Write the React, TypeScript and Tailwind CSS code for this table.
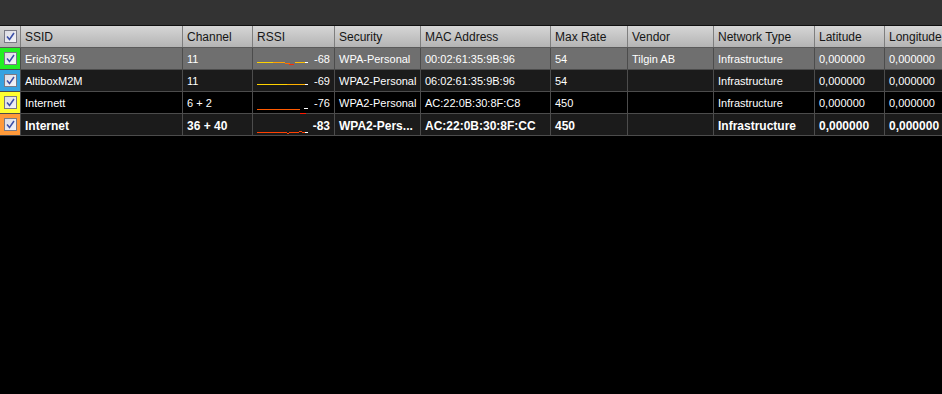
import React from "react";

const widths = [21, 162, 70, 82, 86, 130, 77, 86, 101, 70, 80];
const headers = ["", "SSID", "Channel", "RSSI", "Security", "MAC Address", "Max Rate", "Vendor", "Network Type", "Latitude", "Longitude"];

type Seg = [number, number, number, string]; // x, y, w, color

type Row = {
  color: string;
  bg: string;
  bold?: boolean;
  cells: string[];
  rssi: string;
  spark: Seg[];
};

function Check({ small }: { small?: boolean }) {
  return (
    <div className="w-[13px] h-[13px] border border-[#7a7a86] bg-gradient-to-br from-[#dcdce4] to-[#f4f4f8] flex items-center justify-center">
      <svg width="9" height="9" viewBox="0 0 9 9">
        <path d="M1 4.5 L3.5 7.5 L8 1" fill="none" stroke="#3b4fa8" strokeWidth={small ? 1.5 : 1.6} />
      </svg>
    </div>
  );
}

function Spark({ segs }: { segs: Seg[] }) {
  return (
    <svg width="56" height="22" viewBox="0 0 56 22" className="block" shapeRendering="crispEdges">
      {segs.map(([x, y, w, c], i) => (
        <rect key={i} x={x} y={y} width={w} height={1} fill={c} />
      ))}
    </svg>
  );
}

const rows: Row[] = [
  {
    color: "#22f022",
    bg: "bg-[#6f6f6f]",
    cells: ["Erich3759", "11", "", "WPA-Personal", "00:02:61:35:9B:96", "54", "Tilgin AB", "Infrastructure", "0,000000", "0,000000"],
    rssi: "-68",
    spark: [
      [0, 14, 16, "#ffd200"],
      [16, 14, 12, "#ffa000"],
      [28, 15, 5, "#ff6a00"],
      [32, 16, 5, "#ff2a00"],
      [38, 14, 10, "#ffc000"],
      [48, 14, 3, "#ffffff"],
    ],
  },
  {
    color: "#35a2e0",
    bg: "bg-[#1b1b1b]",
    cells: ["AltiboxM2M", "11", "", "WPA2-Personal", "06:02:61:35:9B:96", "54", "", "Infrastructure", "0,000000", "0,000000"],
    rssi: "-69",
    spark: [
      [0, 14, 30, "#ffd200"],
      [30, 14, 18, "#ffb000"],
      [48, 14, 3, "#ffffff"],
    ],
  },
  {
    color: "#ffff30",
    bg: "bg-[#000000]",
    cells: ["Internett", "6 + 2", "", "WPA2-Personal", "AC:22:0B:30:8F:C8", "450", "", "Infrastructure", "0,000000", "0,000000"],
    rssi: "-76",
    spark: [
      [0, 17, 43, "#ff5a00"],
      [47, 16, 4, "#ffffff"],
      [43, 21, 6, "#ff1a00"],
    ],
  },
  {
    color: "#ff9a3a",
    bg: "bg-[#1b1b1b]",
    bold: true,
    cells: ["Internet", "36 + 40", "", "WPA2-Pers...", "AC:22:0B:30:8F:CC", "450", "", "Infrastructure", "0,000000", "0,000000"],
    rssi: "-83",
    spark: [
      [0, 18, 30, "#ff4000"],
      [30, 19, 2, "#ff4000"],
      [32, 18, 10, "#ff4000"],
      [42, 17, 3, "#ff4000"],
      [45, 18, 3, "#ff4000"],
      [48, 18, 3, "#ffffff"],
    ],
  },
];

export default function App() {
  return (
    <div
      className="w-[942px] h-[394px] bg-black overflow-hidden"
      style={{ fontFamily: '"Liberation Sans", Arial, sans-serif' }}
    >
      <div className="h-[25px] bg-[#333333]" />
      <div className="h-[1px] bg-[#101010]" />
      {/* header */}
      <div className="flex h-[22px] bg-gradient-to-b from-[#d6d6d6] to-[#b4b4b4] border-b border-[#5a5a5a]">
        {headers.map((h, i) => (
          <div
            key={i}
            className="shrink-0 h-full border-r border-[#7e7e7e] flex items-center text-[12px] text-[#161616] overflow-hidden whitespace-nowrap"
            style={{ width: widths[i] }}
          >
            {i === 0 ? (
              <div className="w-full flex justify-center">
                <Check />
              </div>
            ) : (
              <span className="pl-[4px] pt-[1px]">{h}</span>
            )}
          </div>
        ))}
      </div>
      {rows.map((r, ri) => (
        <div key={ri} className={`flex h-[22px] ${r.bg} border-b border-[#4c4c4c]`}>
          <div
            className="shrink-0 h-full border-r border-[#4c4c4c] flex items-center justify-center"
            style={{ width: widths[0], backgroundColor: r.color }}
          >
            <Check small />
          </div>
          {r.cells.map((c, ci) => {
            const i = ci + 1;
            if (i === 3) {
              return (
                <div
                  key={ci}
                  className="shrink-0 h-full border-r border-[#4c4c4c] flex items-center relative"
                  style={{ width: widths[i] }}
                >
                  <div className="absolute left-[4px] top-0">
                    <Spark segs={r.spark} />
                  </div>
                  <span
                    className={`ml-auto pr-[4px] pt-[2px] text-white whitespace-nowrap ${r.bold ? "font-bold text-[12px]" : "text-[11px]"}`}
                  >
                    {r.rssi}
                  </span>
                </div>
              );
            }
            return (
              <div
                key={ci}
                className={`shrink-0 h-full border-r border-[#4c4c4c] flex items-center overflow-hidden whitespace-nowrap text-white ${
                  r.bold ? "font-bold text-[12px]" : "text-[11px]"
                }`}
                style={{ width: widths[i] }}
              >
                <span className="pl-[4px] pt-[2px]">{c}</span>
              </div>
            );
          })}
        </div>
      ))}
    </div>
  );
}
